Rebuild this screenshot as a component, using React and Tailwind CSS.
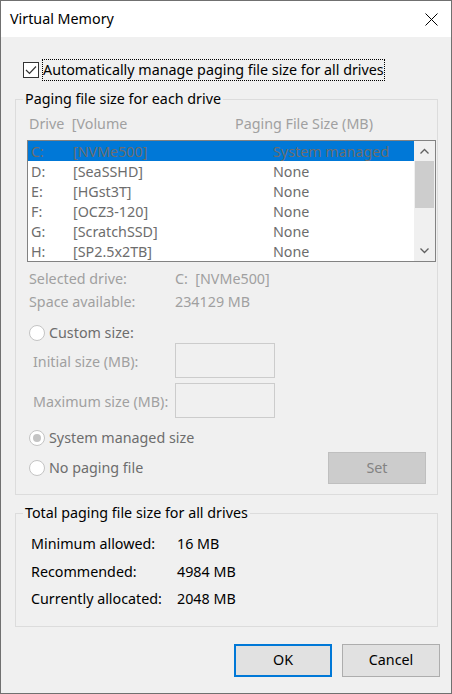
import React from 'react';

const drives = [
  { letter: 'C:', volume: '[NVMe500]', size: 'System managed', selected: true },
  { letter: 'D:', volume: '[SeaSSHD]', size: 'None' },
  { letter: 'E:', volume: '[HGst3T]', size: 'None' },
  { letter: 'F:', volume: '[OCZ3-120]', size: 'None' },
  { letter: 'G:', volume: '[ScratchSSD]', size: 'None' },
  { letter: 'H:', volume: '[SP2.5x2TB]', size: 'None' },
];

const totals = [
  { label: 'Minimum allowed:', value: '16 MB', h: 'h-[28px]' },
  { label: 'Recommended:', value: '4984 MB', h: 'h-[28px]' },
  { label: 'Currently allocated:', value: '2048 MB', h: 'h-[27px]' },
];

const Radio = ({ checked, label }) => (
  <div className="flex items-center">
    <span className="w-[16px] h-[16px] rounded-full border border-[#c4c4c4] bg-white flex items-center justify-center">
      {checked && <span className="w-[8px] h-[8px] rounded-full bg-[#c4c4c4]" />}
    </span>
    <span className="ml-[4px] pb-[1px] text-[#6d6d6d]">{label}</span>
  </div>
);

const Chevron = ({ down }) => (
  <svg width="9" height="6" viewBox="0 0 9 6" className="text-[#606060]">
    <polyline
      points={down ? '0.5,0.5 4.5,4.5 8.5,0.5' : '0.5,5.5 4.5,1.5 8.5,5.5'}
      fill="none"
      stroke="currentColor"
      strokeWidth="1.3"
    />
  </svg>
);

export default function App() {
  return (
    <div className="w-[452px] h-[694px] border border-[#707070] bg-[#f0f0f0] flex flex-col font-['Noto_Sans','Segoe_UI',sans-serif] text-[14.3px] text-black select-none">
      {/* Title bar */}
      <div className="h-[36px] bg-white flex items-center pl-[9px] pr-[13px]">
        <span>Virtual Memory</span>
        <svg width="13" height="13" viewBox="0 0 13 13" className="ml-auto">
          <path d="M0.5 0.5 L12.5 12.5 M12.5 0.5 L0.5 12.5" stroke="#000" strokeWidth="1" />
        </svg>
      </div>

      {/* Auto manage checkbox */}
      <div className="mt-[22px] h-[22px] flex items-center pl-[22px]">
        <span className="w-[16px] h-[16px] border border-[#333] bg-white flex items-center justify-center">
          <svg width="12" height="10" viewBox="0 0 12 10">
            <polyline points="1,5 4.5,8.5 11,1.5" fill="none" stroke="#333" strokeWidth="1.2" />
          </svg>
        </span>
        <span className="ml-[3px] h-[22px] flex items-center border border-dotted border-black leading-none">
          Automatically manage paging file size for all drives
        </span>
      </div>

      {/* Paging file size for each drive */}
      <fieldset className="mt-[8px] ml-[14px] w-[423px] border border-[#dcdcdc] pb-[10px]">
        <legend className="ml-[7px] px-[2px] leading-[20px]">Paging file size for each drive</legend>

        <div className="mt-[5px] h-[20px] flex items-center pl-[13px] text-[#a0a0a0]">
          <span className="w-[206px]">Drive&nbsp;&nbsp;[Volume</span>
          <span>Paging File Size (MB)</span>
        </div>

        <div className="mt-[6px] ml-[11px] w-[409px] h-[122px] border border-[#828282] bg-white flex">
          <div className="w-[386px] flex flex-col">
            {drives.map((d) => (
              <div
                key={d.letter}
                className={`h-[20px] grid grid-cols-[42px_200px_1fr] items-center pl-[3px] pb-[2px] text-[#6d6d6d] ${
                  d.selected ? 'bg-[#0078d7]' : ''
                }`}
              >
                <span>{d.letter}</span>
                <span>{d.volume}</span>
                <span>{d.size}</span>
              </div>
            ))}
          </div>
          <div className="w-[21px] bg-[#f0f0f0] flex flex-col">
            <div className="h-[20px] flex items-center justify-center">
              <Chevron />
            </div>
            <div className="h-[47px] mx-[1px] bg-[#cdcdcd]" />
            <div className="flex-1" />
            <div className="h-[20px] flex items-center justify-center">
              <Chevron down />
            </div>
          </div>
        </div>

        <div className="mt-[6px] pl-[13px] text-[#a0a0a0]">
          <div className="h-[23px] flex items-center pb-[1px]">
            <span className="w-[146px]">Selected drive:</span>
            <span>C:&nbsp;&nbsp;[NVMe500]</span>
          </div>
          <div className="h-[23px] flex items-center pb-[1px]">
            <span className="w-[146px]">Space available:</span>
            <span>234129 MB</span>
          </div>
        </div>

        <div className="mt-[9px] pl-[13px] h-[20px] flex items-center">
          <Radio label="Custom size:" />
        </div>

        <div className="h-[35px] flex items-center pl-[17px] text-[#a0a0a0]">
          <span className="w-[142px] pt-[2px]">Initial size (MB):</span>
          <span className="w-[100px] h-[35px] border border-[#cccccc] bg-[#f0f0f0]" />
        </div>
        <div className="mt-[5px] h-[35px] flex items-center pl-[17px] text-[#a0a0a0]">
          <span className="w-[142px] pt-[2px]">Maximum size (MB):</span>
          <span className="w-[100px] h-[35px] border border-[#cccccc] bg-[#f0f0f0]" />
        </div>

        <div className="mt-[10px] pl-[13px] h-[20px] flex items-center">
          <Radio checked label="System managed size" />
        </div>

        <div className="mt-[4px] pl-[13px] h-[32px] flex items-center">
          <Radio label="No paging file" />
          <button className="ml-auto mr-[11px] w-[98px] h-[32px] pb-[1px] bg-[#cccccc] border border-[#bfbfbf] text-[#838383]">
            Set
          </button>
        </div>
      </fieldset>

      {/* Total paging file size */}
      <fieldset className="mt-[8px] ml-[14px] w-[423px] border border-[#dcdcdc] pb-[13px]">
        <legend className="ml-[7px] px-[2px] leading-[20px]">Total paging file size for all drives</legend>
        <div className="mt-[7px] pl-[15px]">
          {totals.map((t) => (
            <div key={t.label} className={`${t.h} flex items-center pb-[1px]`}>
              <span className="w-[146px]">{t.label}</span>
              <span>{t.value}</span>
            </div>
          ))}
        </div>
      </fieldset>

      {/* Buttons */}
      <div className="mt-[17px] flex justify-end gap-[10px] pr-[11px]">
        <button className="w-[98px] h-[33px] pb-[1px] bg-[#e1e1e1] border-2 border-[#0078d7]">OK</button>
        <button className="w-[98px] h-[33px] pb-[1px] bg-[#e1e1e1] border border-[#adadad]">Cancel</button>
      </div>
    </div>
  );
}
